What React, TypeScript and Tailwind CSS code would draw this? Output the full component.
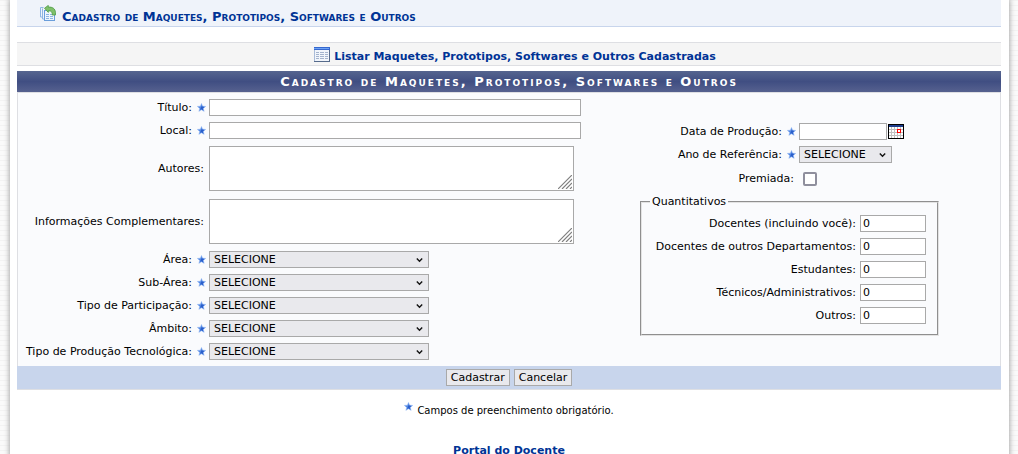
import { useId, type ReactNode } from "react";

const SELECTS = ["Área", "Sub-Área", "Tipo de Participação", "Âmbito", "Tipo de Produção Tecnológica"];

const QUANTITIES = [
  "Docentes (incluindo você)",
  "Docentes de outros Departamentos",
  "Estudantes",
  "Técnicos/Administrativos",
  "Outros",
];

const fieldClass = "h-[17px] border border-[#a9a9a9] bg-white px-0.5 text-[11px] leading-[15px]";

function Star() {
  return (
    <svg className="h-[9px] w-[9px] shrink-0" viewBox="0 0 10 10" aria-hidden="true">
      <path
        d="M5 .6 6.2 3.6 9.6 3.8 7 6 7.9 9.3 5 7.5 2.1 9.3 3 6 .4 3.8 3.8 3.6Z"
        fill="#4f86e4"
        stroke="#8fb4f2"
        strokeWidth=".6"
      />
      <path d="M5 3.6 8 4.400 6.4 6 7 8.2 5 7 3.500 7.600Z" fill="#2a5dc9" />
    </svg>
  );
}

function CopyIcon() {
  return (
    <svg className="h-4 w-4 shrink-0" viewBox="0 0 16 16" aria-hidden="true">
      <path d="M.5 2.500V12h2M2.500 3.500V14h2M.5 2.500h3" fill="none" stroke="#8fb6e4" />
      <rect x="4.500" y="5.500" width="10" height="10" fill="#eef5fd" stroke="#6a9edb" />
      <path d="M6 9.500h3M10 9.500h3M6 11.500h3M10 11.500h3M6 13.500h3M10 13.500h3" stroke="#8db4e2" />
      <path
        d="M4.500 3.200 8.300.4v1.700c4.200-.3 6.900 1.500 7.200 5.400v2.500h-3.200c.2-3-1-4.300-4-4.200v1.600Z"
        fill="#7fc06b"
        stroke="#4d9a45"
        strokeWidth=".8"
      />
    </svg>
  );
}

function ListIcon() {
  return (
    <svg className="h-[15px] w-4 shrink-0" viewBox="0 0 16 15" aria-hidden="true">
      <rect width="16" height="15" fill="#566b8c" />
      <rect width="15" height="14" fill="#a9bbd8" />
      <rect x="1" y="3" width="14" height="11" fill="#f1f5fb" />
      <rect width="16" height="3" fill="#3568cf" />
      <rect y="1" width="15" height="1" fill="#6fa3f5" />
      <path
        d="M2 5.500h3M6 5.500h4M11 5.500h3M2 7.500h3M6 7.500h4M11 7.500h3M2 9.500h3M6 9.500h4M11 9.500h3M2 11.500h3M6 11.500h4M11 11.500h3"
        stroke="#a3b3cd"
      />
    </svg>
  );
}

function CalendarIcon() {
  return (
    <svg className="h-[15px] w-4" viewBox="0 0 16 15" shapeRendering="crispEdges" aria-hidden="true">
      <rect width="16" height="15" fill="#000" />
      <rect x="1" y="1" width="14" height="13" fill="#fff" />
      <rect x="1" y="1" width="14" height="2" fill="#1c3d8c" />
      <path d="M3.500 3v11M6.500 3v11M9.500 3v11M12.500 3v11M1 5.500h14M1 8.500h14M1 11.500h14" stroke="#c0c0c0" />
      <rect x="9.500" y="5.500" width="3" height="3" fill="#fff" stroke="#f00" />
    </svg>
  );
}

function Label({ htmlFor, required, children }: { htmlFor: string; required?: boolean; children: ReactNode }) {
  return (
    <label htmlFor={htmlFor} className="flex items-center justify-end gap-[5px] pr-px whitespace-nowrap">
      <span className={required ? "" : "pr-0.5"}>{children}:</span>
      {required && <Star />}
    </label>
  );
}

function Select({ id, className }: { id: string; className: string }) {
  return (
    <div className={`relative ${className}`}>
      <select
        id={id}
        className="block h-[17px] w-full appearance-none border border-[#a9a9a9] bg-[#e9e9ed] pl-1 text-[11px] leading-[15px]"
      >
        <option>SELECIONE</option>
      </select>
      <svg
        className="pointer-events-none absolute top-[7px] right-1.5"
        width="7"
        height="5"
        viewBox="0 0 7 5"
        aria-hidden="true"
      >
        <path d="m.8.6 2.700 2.700L6.200.6" fill="none" stroke="#111" strokeWidth="1.400" />
      </svg>
    </div>
  );
}

function TextArea({ id }: { id: string }) {
  return (
    <div className="relative w-[365px]">
      <textarea id={id} className="block h-[45px] w-full resize-none border border-[#a9a9a9] bg-white p-0.5" />
      <svg
        className="pointer-events-none absolute right-0.5 bottom-0.5"
        width="14"
        height="14"
        viewBox="0 0 14 14"
        aria-hidden="true"
      >
        <path d="M0 14 14 0M4 14 14 4M8 14l6-6M12 14l2-2" stroke="#808080" strokeWidth="1.200" />
      </svg>
    </div>
  );
}

export default function App() {
  const id = useId();

  return (
    <div className="min-h-screen bg-[repeating-linear-gradient(#f3f3f3_0_1px,#fafafa_1px_5px)] pr-[9px] pl-[10px] font-['DejaVu_Sans',Verdana,sans-serif] text-[11px] leading-[14px] text-black">
      <main className="bg-white pr-2 pl-[7px] shadow-[0_0_5px_1px_#aaa]">
        <h1 className="flex h-[27px] items-center gap-1.5 border-b border-[#c8d5ec] bg-[#eff3fa] pl-[23px] text-[13px] font-bold text-[#003395]">
          <CopyIcon />
          <span className="pt-2 [font-variant:small-caps]">Cadastro de Maquetes, Prototipos, Softwares e Outros</span>
        </h1>

        <div className="mt-[15px] flex h-6 items-center justify-center gap-1 border-y border-[#dedfe3] bg-[#f5f5f5] pl-3">
          <ListIcon />
          <a href="#listar" className="pt-1.5 font-bold text-[#003395]">
            Listar Maquetes, Prototipos, Softwares e Outros Cadastradas
          </a>
        </div>

        <form className="mt-[5px]" onSubmit={(e) => e.preventDefault()}>
          <h2 className="bg-linear-to-b from-[#56658f] via-[#404e82] to-[#56618f] text-center text-[13px] leading-[21px] font-bold tracking-[2px] text-white [font-variant:small-caps]">
            Cadastro de Maquetes, Prototipos, Softwares e Outros
          </h2>

          <div className="flex items-center justify-between border border-b-0 border-[#dedfe3] bg-[#fafbfd] py-[3px] pr-[61px]">
            <div className="grid grid-cols-[189px_auto] items-center gap-x-0.5 gap-y-1.5 py-[3px]">
              <Label htmlFor={`${id}-titulo`} required>Título</Label>
              <input id={`${id}-titulo`} className={`${fieldClass} w-[372px]`} />
              <Label htmlFor={`${id}-local`} required>Local</Label>
              <input id={`${id}-local`} className={`${fieldClass} w-[372px]`} />
              <Label htmlFor={`${id}-autores`}>Autores</Label>
              <div className="py-px"><TextArea id={`${id}-autores`} /></div>
              <Label htmlFor={`${id}-info`}>Informações Complementares</Label>
              <div className="py-px"><TextArea id={`${id}-info`} /></div>
              {SELECTS.map((name) => (
                <div key={name} className="contents">
                  <Label htmlFor={`${id}-${name}`} required>{name}</Label>
                  <Select id={`${id}-${name}`} className="w-[220px]" />
                </div>
              ))}
            </div>

            <div className="w-[299px]">
              <div className="grid grid-cols-[157px_auto] items-center gap-x-0.5 gap-y-1.5">
                <Label htmlFor={`${id}-data`} required>Data de Produção</Label>
                <div className="flex items-center gap-px">
                  <input id={`${id}-data`} className={`${fieldClass} w-[88px]`} />
                  <button type="button" aria-label="Abrir calendário">
                    <CalendarIcon />
                  </button>
                </div>
                <Label htmlFor={`${id}-ano`} required>Ano de Referência</Label>
                <Select id={`${id}-ano`} className="w-[93px]" />
                <Label htmlFor={`${id}-premiada`}>Premiada</Label>
                <input
                  id={`${id}-premiada`}
                  type="checkbox"
                  className="my-[3px] ml-1 h-[14px] w-[14px] appearance-none rounded-xs border-2 border-[#8f8f9d] bg-white"
                />
              </div>

              <fieldset className="mt-1.5 border-2 border-[#e3e3e3] px-2 pb-2.5 [border-style:groove]!">
                <legend className="px-0.5">Quantitativos</legend>
                <div className="grid grid-cols-[auto_66px] items-center justify-end gap-x-1 gap-y-1.5 pt-1.5 pr-[3px]">
                  {QUANTITIES.map((name) => (
                    <div key={name} className="contents">
                      <label htmlFor={`${id}-${name}`} className="text-right whitespace-nowrap">{name}:</label>
                      <input id={`${id}-${name}`} defaultValue="0" className={`${fieldClass} w-full`} />
                    </div>
                  ))}
                </div>
              </fieldset>
            </div>
          </div>

          <div className="flex h-6 items-center justify-center gap-1 border-b border-[#dedfe3] bg-[#c8d5ec]">
            <button type="submit" className="h-[17px] border border-[#a9a9a9] bg-[#e9e9ed] px-1 leading-[15px]">
              Cadastrar
            </button>
            <button type="button" className="h-[17px] border border-[#a9a9a9] bg-[#e9e9ed] px-1 leading-[15px]">
              Cancelar
            </button>
          </div>
        </form>

        <p className="mt-3 flex items-start justify-center gap-1 text-[10px]">
          <Star />
          <span className="pt-0.5">Campos de preenchimento obrigatório.</span>
        </p>

        <div className="pt-[26px] text-center">
          <a href="#portal" className="font-bold text-[#003395]">Portal do Docente</a>
        </div>
      </main>
    </div>
  );
}
